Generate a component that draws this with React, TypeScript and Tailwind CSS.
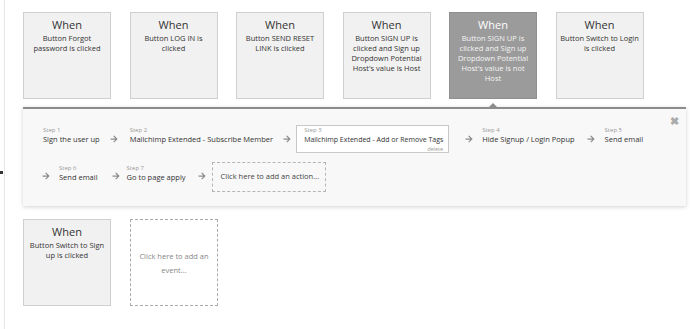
import React from "react";
import { FaArrowRight } from "react-icons/fa";

type EventCard = { text: string; selected?: boolean };

const events: EventCard[] = [
  { text: "Button Forgot password is clicked" },
  { text: "Button LOG IN is clicked" },
  { text: "Button SEND RESET LINK is clicked" },
  { text: "Button SIGN UP is clicked and Sign up Dropdown Potential Host's value is Host" },
  { text: "Button SIGN UP is clicked and Sign up Dropdown Potential Host's value is not Host", selected: true },
  { text: "Button Switch to Login is clicked" },
];

function Card({ text, selected }: EventCard) {
  return (
    <div
      className={
        selected
          ? "w-[88px] h-[87px] shrink-0 border border-[#8f8f8f] bg-[#9b9b9b] text-white px-[3px] pt-[5px] text-center"
          : "w-[88px] h-[87px] shrink-0 border border-[#cfcfcf] bg-[#f1f1f1] text-[#333] px-[3px] pt-[5px] text-center"
      }
    >
      <div className="text-[11px] leading-[14px]">When</div>
      <div className={selected ? "text-[7.5px] leading-[10px] mt-[1px] text-[#f4f4f4]" : "text-[7.5px] leading-[10px] mt-[1px]"}>
        {text}
      </div>
    </div>
  );
}

function Arrow() {
  return (
    <div className="mt-[10px] shrink-0">
      <FaArrowRight className="w-[8px] h-[8px] text-[#8a8a8a]" />
    </div>
  );
}

function Step({ n, title }: { n: number; title: string }) {
  return (
    <div className="flex flex-col shrink-0 mt-[2px]">
      <span className="text-[6px] leading-[7px] text-[#999]">Step {n}</span>
      <span className="text-[7.5px] leading-[11px] text-[#333] whitespace-nowrap">{title}</span>
    </div>
  );
}

export default function App() {
  return (
    <div
      className="relative w-[690px] h-[329px] bg-white overflow-hidden"
      style={{ fontFamily: '"Open Sans", "Noto Sans", sans-serif' }}
    >
      {/* left gutter line */}
      <div className="absolute left-[4px] top-0 bottom-0 w-px bg-[#e6e6e6]" />
      <div className="absolute left-0 top-[171px] w-[3px] h-[3px] bg-[#333]" />

      <div className="pl-[23px] pt-[12px]">
        {/* events row */}
        <div className="flex gap-[18.5px]">
          {events.map((e, i) => (
            <Card key={i} {...e} />
          ))}
        </div>

        {/* actions panel */}
        <div className="relative mt-[8px] w-[663px] h-[99px] bg-[#f8f8f8] border-t-2 border-[#8c8c8c] shadow-[0_1px_4px_rgba(0,0,0,0.18)]">
          <div className="absolute -top-[6px] left-[465px] w-0 h-0 border-l-[5px] border-r-[5px] border-b-[5px] border-l-transparent border-r-transparent border-b-[#8c8c8c]" />
          <span className="absolute right-[7px] top-[6px] text-[11px] leading-none text-[#aaa] font-bold">✖</span>

          <div className="flex items-start pl-[20px] pt-[16px]">
            <Step n={1} title="Sign the user up" />
            <div className="ml-[10px] mr-[12px]"><Arrow /></div>
            <Step n={2} title="Mailchimp Extended - Subscribe Member" />
            <div className="ml-[10px] mr-[5px]"><Arrow /></div>
            <div className="relative w-[153px] h-[28px] border border-[#c8c8c8] bg-white px-[7px] pt-[1px] shrink-0">
              <div className="text-[6px] leading-[7px] text-[#999]">Step 3</div>
              <div className="text-[7px] leading-[11px] text-[#333] whitespace-nowrap">Mailchimp Extended - Add or Remove Tags</div>
              <div className="absolute right-[5px] bottom-0 text-[5.5px] leading-[6px] text-[#999]">delete</div>
            </div>
            <div className="ml-[16px] mr-[9px]"><Arrow /></div>
            <Step n={4} title="Hide Signup / Login Popup" />
            <div className="ml-[12px] mr-[10px]"><Arrow /></div>
            <Step n={5} title="Send email" />
          </div>

          <div className="flex items-start pl-[19px] mt-[9px]">
            <Arrow />
            <div className="ml-[9px] mt-[1px]"><Step n={6} title="Send email" /></div>
            <div className="ml-[14px] mr-[7px]"><Arrow /></div>
            <div className="mt-[1px]"><Step n={7} title="Go to page apply" /></div>
            <div className="ml-[12px] mr-[6px]"><Arrow /></div>
            <div className="w-[114px] h-[30px] border border-dashed border-[#b5b5b5] flex items-center pl-[8px] text-[7.5px] text-[#444] whitespace-nowrap">
              Click here to add an action...
            </div>
          </div>
        </div>

        {/* bottom events */}
        <div className="flex gap-[19px] mt-[13px]">
          <Card text="Button Switch to Sign up is clicked" />
          <div className="w-[88px] h-[87px] border border-dashed border-[#aaa] flex items-center justify-center text-center px-[8px] text-[7.5px] leading-[14px] text-[#888]">
            Click here to add an event...
          </div>
        </div>
      </div>
    </div>
  );
}
